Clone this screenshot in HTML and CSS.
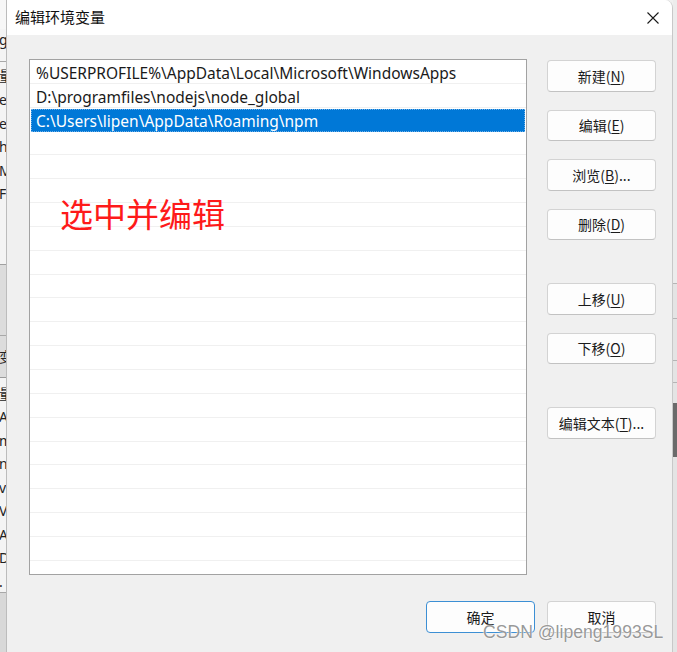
FILE: index.html
```html
<!DOCTYPE html>
<html lang="zh-CN">
<head>
<meta charset="utf-8">
<title>编辑环境变量</title>
<link rel="stylesheet" href="styles.css">
</head>
<body>
<div class="screen">
  <div class="bg-left">
    <div class="sp-top"></div>
    <div class="frag frag-g">g</div>
    <div class="sep-a"></div>
    <div class="frag frag-tall">量</div>
    <div class="frag">e</div>
    <div class="frag">e</div>
    <div class="frag">h</div>
    <div class="frag">M</div>
    <div class="frag">F</div>
    <div class="sp-mid"></div>
    <div class="bg-block">
      <div class="bg-block-top"></div>
      <div class="frag frag-bl">变</div>
    </div>
    <div class="frag frag-first">量</div>
    <div class="frag">A</div>
    <div class="frag">m</div>
    <div class="frag">n</div>
    <div class="frag">v</div>
    <div class="frag">V/</div>
    <div class="frag">A\</div>
    <div class="frag">D</div>
    <div class="frag frag-last">.</div>
    <div class="bg-bottom"></div>
  </div>

  <div class="dialog">
    <div class="titlebar">
      <span class="title">编辑环境变量</span>
      <span class="close" aria-label="关闭">
        <svg width="12" height="12" viewBox="0 0 12 12"><path d="M0.5 0.5 L11.5 11.5 M11.5 0.5 L0.5 11.5" stroke="#1a1a1a" stroke-width="1.1" fill="none"/></svg>
      </span>
    </div>
    <div class="body">
      <div class="main">
        <div class="list">
          <div class="row">%USERPROFILE%\AppData\Local\Microsoft\WindowsApps</div>
          <div class="row">D:\programfiles\nodejs\node_global</div>
          <div class="row selected"><span class="sel-text">C:\Users\lipen\AppData\Roaming\npm</span></div>
          <div class="row"></div>
          <div class="row"></div>
          <div class="row"></div>
          <div class="row"></div>
          <div class="row"></div>
          <div class="row"></div>
          <div class="row"></div>
          <div class="row"></div>
          <div class="row"></div>
          <div class="row"></div>
          <div class="row"></div>
          <div class="row"></div>
          <div class="row"></div>
          <div class="row"></div>
          <div class="row"></div>
          <div class="row"></div>
          <div class="row"></div>
          <div class="row"></div>
          <div class="row"></div>
          <div class="note">选中并编辑</div>
        </div>
        <div class="actions">
          <button class="btn">新建(<u>N</u>)</button>
          <button class="btn">编辑(<u>E</u>)</button>
          <button class="btn">浏览(<u>B</u>)...</button>
          <button class="btn">删除(<u>D</u>)</button>
          <button class="btn btn-gap">上移(<u>U</u>)</button>
          <button class="btn">下移(<u>O</u>)</button>
          <button class="btn btn-gap">编辑文本(<u>T</u>)...</button>
        </div>
      </div>
      <div class="footer">
        <button class="btn btn-foot btn-default">确定</button>
        <button class="btn btn-foot">取消</button>
      </div>
    </div>
    <div class="watermark">CSDN @lipeng1993SL</div>
  </div>

  <div class="bg-right">
    <div class="r-top"></div>
    <div class="r-line r-l1"></div>
    <div class="r-line r-l2"></div>
    <div class="r-line r-l3"></div>
    <div class="r-line r-l4"></div>
    <div class="r-dark"></div>
  </div>
</div>
</body>
</html>
```

FILE: styles.css
```css
* { box-sizing: border-box; }
html, body { margin: 0; padding: 0; }
body {
  background: #f0f0f0;
  font-family: "Noto Sans", "Noto Sans CJK SC", sans-serif;
}
.screen {
  display: flex;
  width: 677px;
  height: 652px;
  overflow: hidden;
  background: #f0f0f0;
}

/* background window strip on the left */
.bg-left {
  width: 6px;
  flex: none;
  overflow: hidden;
  background: #f4f4f4;
  display: flex;
  flex-direction: column;
  font-family: "Noto Sans", "Noto Sans CJK SC", sans-serif;
  font-size: 14px;
  color: #222;
}
.sp-top { height: 29px; flex: none; background: #f7f7f7; }
.frag {
  height: 23.5px;
  line-height: 23.5px;
  flex: none;
  white-space: nowrap;
  margin-left: -1px;
}
.frag-g { height: 24px; line-height: 22px; }
.sep-a { height: 9px; flex: none; border-bottom: 1px solid #a8a8a8; }
.frag-tall { height: 26px; line-height: 28px; }
.sp-mid { height: 58px; flex: none; }
.bg-block {
  height: 114px;
  flex: none;
  background: #dcdcdc;
  border-top: 1px solid #a0a0a0;
  border-bottom: 1px solid #9a9a9a;
  display: flex;
  flex-direction: column;
}
.bg-block-top { height: 71px; flex: none; border-bottom: 1px solid #a8a8a8; }
.frag-bl { height: 41px; line-height: 41px; }
.frag-first { margin-top: 4px; }
.frag-last { border-bottom: 1px solid #a8a8a8; }
.bg-bottom { flex: 1; background: #d8d8d8; }

/* background strip on the right */
.bg-right {
  width: 4px;
  flex: none;
  background: #e4e4e4;
  display: flex;
  flex-direction: column;
}
.r-top { height: 283px; flex: none; background: #ececec; }
.r-line { flex: none; border-top: 1px solid #b5b5b5; }
.r-l1 { height: 35px; }
.r-l2 { height: 42px; }
.r-l3 { height: 22px; }
.r-l4 { height: 21px; }
.r-dark { height: 54px; flex: none; background: #6a6a6a; }

/* dialog */
.dialog {
  position: relative;
  width: 667px;
  flex: none;
  background: #f0f0f0;
  border-left: 1px solid #bcbcbc;
  border-right: 1px solid #c8c8c8;
  border-top-right-radius: 8px;
  overflow: hidden;
  display: flex;
  flex-direction: column;
}
.titlebar {
  height: 35px;
  flex: none;
  background: #ffffff;
  display: flex;
  align-items: center;
  justify-content: space-between;
  padding: 0 13px 0 8px;
}
.title {
  font-family: "Noto Sans CJK SC", sans-serif;
  font-size: 15px;
  color: #111;
  line-height: 1;
  margin-top: -2px;
}
.close {
  display: flex;
  width: 12px;
  height: 12px;
}

.body {
  padding: 24px 16px 0 22px;
  display: flex;
  flex-direction: column;
}
.main {
  display: flex;
  gap: 20px;
}
.list {
  position: relative;
  width: 498px;
  height: 516px;
  background: #ffffff;
  border: 1px solid #a2a2a2;
  overflow: hidden;
}
.row {
  height: 23.85px;
  border-bottom: 1.5px solid #f0f0f0;
  padding-left: 6px;
  font-family: "Noto Sans", "Noto Sans CJK SC", sans-serif;
  font-size: 15.5px;
  line-height: 27px;
  color: #1a1a1a;
  white-space: nowrap;
}
.row.selected {
  background: #0078d7;
  color: #ffffff;
  border-bottom-color: #0078d7;
  margin: 1px 1px 0;
  height: 22.85px;
  line-height: 25px;
  padding-left: 5px;
  outline: 1px dotted #6fb0e8;
  outline-offset: -1px;
}
.note {
  position: absolute;
  left: 30px;
  top: 137px;
  font-family: "Noto Sans CJK SC", sans-serif;
  font-size: 33px;
  line-height: 1;
  color: #fe1a1a;
}

.actions {
  width: 109px;
  display: flex;
  flex-direction: column;
  padding-top: 1px;
  gap: 18px;
}
.btn {
  height: 31.5px;
  flex: none;
  background: #fdfdfd;
  border: 1px solid #d3d3d3;
  border-bottom-color: #c2c2c2;
  border-radius: 4px;
  font-family: "Noto Sans CJK SC", sans-serif;
  font-size: 14px;
  color: #1b1b1b;
  padding: 0;
  line-height: 1;
}
.btn u { text-underline-offset: 2px; }
.btn-gap { margin-top: 25px; }

.footer {
  display: flex;
  justify-content: flex-end;
  gap: 12px;
  margin-top: 26px;
}
.btn-foot { width: 109px; height: 32px; }
.btn-default {
  border: 1.5px solid #3c8fd4;
}

.watermark {
  position: absolute;
  left: 476px;
  top: 624px;
  font-family: "Liberation Sans", Arial, sans-serif;
  font-size: 17.6px;
  line-height: 1;
  color: rgba(125, 125, 125, 0.8);
  text-shadow: 0 0 1px #fff, 0 0 2px #fff;
  white-space: nowrap;
}
```
